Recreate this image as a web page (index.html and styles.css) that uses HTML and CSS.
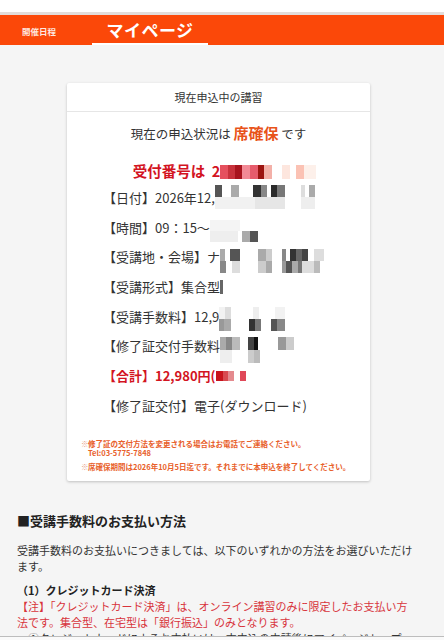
FILE: index.html
```html
<!DOCTYPE html>
<html lang="ja">
<head>
<meta charset="utf-8">
<title>マイページ</title>
<link rel="stylesheet" href="styles.css">
</head>
<body>
<div class="topstrip"></div>
<nav class="nav">
  <span class="nav-item">開催日程</span>
  <span class="nav-tab">マイページ</span>
</nav>
<main class="main">
  <section class="card">
    <div class="card-head">現在申込中の講習</div>
    <div class="card-body">
      <p class="status">現在の申込状況は <strong class="status-val">席確保</strong> です</p>
      <p class="receipt">受付番号は&nbsp; 2<span class="mz mz-receipt"></span></p>
      <div class="rows">
        <div class="row">【日付】2026年12,<span class="mz mz-date"></span></div>
        <div class="row">【時間】09：15～<span class="mz mz-time"></span></div>
        <div class="row">【受講地・会場】ナ<span class="mz mz-place"></span></div>
        <div class="row">【受講形式】集合型<span class="mz mz-form"></span></div>
        <div class="row">【受講手数料】12,9<span class="mz mz-fee"></span></div>
        <div class="row">【修了証交付手数料<span class="mz mz-cert"></span></div>
        <div class="row row-total">【合計】12,980円(<span class="mz mz-total"></span></div>
        <div class="row">【修了証交付】電子(ダウンロード)</div>
      </div>
      <ul class="notes">
        <li><span class="mark">※</span><span>修了証の交付方法を変更される場合はお電話でご連絡ください。<br>Tel:03-5775-7848</span></li>
        <li><span class="mark">※</span><span>席確保期間は2026年10月5日迄です。それまでに本申込を終了してください。</span></li>
      </ul>
    </div>
  </section>

  <section class="pay">
    <h2 class="pay-title">■受講手数料のお支払い方法</h2>
    <p class="pay-text">受講手数料のお支払いにつきましては、以下のいずれかの方法をお選びいただけます。</p>
    <h3 class="pay-sub">（1）クレジットカード決済</h3>
    <p class="pay-warn">【注】「クレジットカード決済」は、オンライン講習のみに限定したお支払い方法です。集合型、在宅型は「銀行振込」のみとなります。</p>
    <p class="pay-item">①クレジットカードによるお支払いは、本申込の申請後にマイページトップ</p>
  </section>
</main>
<div class="bottombar"></div>
</body>
</html>
```

FILE: styles.css
```css
* { box-sizing: border-box; }
html, body { margin: 0; padding: 0; }
body {
  font-family: "Noto Sans CJK JP", "Noto Sans", sans-serif;
  background: #f5f5f5;
  color: #333;
  width: 444px;
  height: 640px;
  overflow: hidden;
}
.topstrip {
  height: 15px;
  background: #fff;
  border-bottom: 3px solid #e2dcda;
}
.nav {
  height: 30px;
  background: #fb4809;
  display: flex;
  align-items: stretch;
}
.nav-item {
  display: flex;
  align-items: center;
  padding-left: 22px;
  width: 92px;
  font-size: 8.5px;
  font-weight: 700;
  color: rgba(255,255,255,0.88);
  padding-top: 2px;
}
.nav-tab {
  width: 116px;
  display: flex;
  align-items: center;
  justify-content: center;
  font-size: 17px;
  font-weight: 700;
  color: #fff;
  border-bottom: 2px solid #fff;
  padding-top: 1px;
  letter-spacing: 0.5px;
}
.main { padding-top: 38px; }
.card {
  margin-left: 67px;
  width: 303px;
  background: #fff;
  border-radius: 2px;
  box-shadow: 0 1px 3px rgba(0,0,0,0.22);
}
.card-head {
  height: 29px;
  line-height: 28px;
  text-align: center;
  font-size: 11px;
  color: #333;
  border-bottom: 1px solid #e6e6e6;
}
.card-body { padding: 11px 0 6px; }
.status {
  margin: 0;
  height: 20px;
  line-height: 20px;
  text-align: center;
  font-size: 12.5px;
  color: #333;
}
.status-val {
  color: #e8531a;
  font-size: 15px;
  font-weight: 700;
}
.receipt {
  margin: 18px 0 0;
  height: 20px;
  line-height: 20px;
  text-align: center;
  font-size: 14.5px;
  font-weight: 700;
  color: #d3141f;
  padding-left: 12px;
}
.rows { padding-left: 36px; margin-top: 2px; }
.row {
  height: 29.7px;
  line-height: 29.7px;
  font-size: 13px;
  color: #333;
  white-space: nowrap;
}
.row-total { color: #d3141f; font-weight: 700; }
.mz {
  display: inline-block;
  vertical-align: middle;
  background-repeat: no-repeat;
  background-size: 100% 50%, 100% 50%;
  background-position: top left, bottom left;
}
.mz-receipt {
  width: 96px; height: 14px; margin-top: -3px;
  background-size: 100% 100%;
  background-image: linear-gradient(90deg, #e5505e 0 8px, #c8323c 8px 15px, #a8141e 15px 22px, #f28a96 22px 30px, #e65c6c 30px 38px, #9c1410 38px 44px, #f3b0a8 44px 52px, #fff 52px 62px, #fde6de 62px 70px, #fff 70px 76px, #fbc2b4 76px 84px, #fdf0ea 84px 96px);
}
.mz-date {
  width: 108px; height: 24px; margin-top: -4px;
  background-image:
    linear-gradient(90deg, #555 0 7px, #fff 7px 16px, #aaa 16px 24px, #fff 24px 38px, #333 38px 46px, #888 46px 52px, #fff 52px 56px, #2a2a2a 56px 62px, #777 62px 70px, #fff 70px 86px, #ddd 86px 90px, #fff 90px 94px, #aaa 94px 100px, #fff 100px 108px),
    linear-gradient(90deg, #f1f1f1 0 40px, #e6e6e6 40px 70px, #fff 70px 86px, #eee 86px 100px, #fff 100px 108px);
}
.mz-time {
  width: 50px; height: 22px; margin-top: 4px;
  background-image:
    linear-gradient(90deg, #f4f4f4 0 30px, #fff 30px 50px),
    linear-gradient(90deg, #eee 0 28px, #fff 28px 32px, #aaa 32px 40px, #555 40px 48px, #fff 48px 50px);
}
.mz-place {
  width: 118px; height: 24px; margin-top: 4px;
  background-image:
    linear-gradient(90deg, #aaa 0 5px, #fff 5px 10px, #555 10px 20px, #fff 20px 38px, #aaa 38px 46px, #ccc 46px 52px, #fff 52px 62px, #888 62px 66px, #fff 66px 70px, #333 70px 76px, #666 76px 82px, #444 82px 88px, #fff 88px 94px, #ddd 94px 104px, #fff 104px 118px),
    linear-gradient(90deg, #888 0 6px, #fff 6px 12px, #ddd 12px 20px, #fff 20px 38px, #ccc 38px 46px, #aaa 46px 52px, #fff 52px 62px, #999 62px 66px, #555 66px 72px, #aaa 72px 78px, #777 78px 82px, #ddd 82px 94px, #bbb 94px 100px, #fff 100px 118px);
}
.mz-form {
  width: 3px; height: 14px; margin-top: -4px;
  background: #666;
}
.mz-fee {
  width: 66px; height: 24px; margin-top: 2px;
  background-image:
    linear-gradient(90deg, #f2f2f2 0 6px, #ddd 6px 12px, #fff 12px 34px, #eee 34px 40px, #fff 40px 56px, #f2f2f2 56px 66px),
    linear-gradient(90deg, #999 0 5px, #aaa 5px 12px, #fff 12px 30px, #333 30px 36px, #777 36px 42px, #fff 42px 52px, #555 52px 58px, #888 58px 66px);
}
.mz-cert {
  width: 74px; height: 26px; margin-top: 4px;
  background-image:
    linear-gradient(90deg, #aaa 0 6px, #888 6px 12px, #bbb 12px 20px, #fff 20px 28px, #444 28px 34px, #111 34px 38px, #fff 38px 58px, #999 58px 66px, #ccc 66px 74px),
    linear-gradient(90deg, #eee 0 12px, #fff 12px 28px, #ccc 28px 34px, #bbb 34px 40px, #fff 40px 74px);
}
.mz-total {
  width: 30px; height: 10px; margin-top: -3px;
  background-size: 100% 100%;
  background-image: linear-gradient(90deg, #c8141c 0 7px, #d84a50 7px 12px, #e48a8e 12px 18px, #fff 18px 24px, #e04858 24px 30px);
}
.notes {
  list-style: none;
  margin: 18px 0 0;
  padding: 0 10px 0 14px;
}
.notes li {
  display: flex;
  font-size: 7.5px;
  line-height: 9.5px;
  font-weight: 700;
  color: #e8602a;
  margin-bottom: 4px;
}
.notes .mark {
  color: #e8a088;
  width: 7px;
  flex: none;
}
.pay { padding: 30px 27px 0 17px; }
.pay-title {
  margin: 0;
  font-size: 13px;
  line-height: 20px;
  font-weight: 700;
  color: #222;
}
.pay-text {
  margin: 11px 0 0;
  font-size: 11px;
  line-height: 16px;
  color: #333;
}
.pay-sub {
  margin: 8px 0 0;
  font-size: 11px;
  line-height: 16px;
  font-weight: 700;
  color: #222;
}
.pay-warn {
  margin: 0;
  font-size: 11px;
  line-height: 16px;
  color: #d8343c;
}
.pay-item {
  margin: 0;
  padding-left: 11px;
  font-size: 11px;
  line-height: 16px;
  color: #333;
  white-space: nowrap;
}
.bottombar {
  position: fixed;
  left: 0;
  right: 0;
  bottom: 0;
  height: 4px;
  background: #fafafa;
  border-top: 1px solid #bdbdbd;
}
```
